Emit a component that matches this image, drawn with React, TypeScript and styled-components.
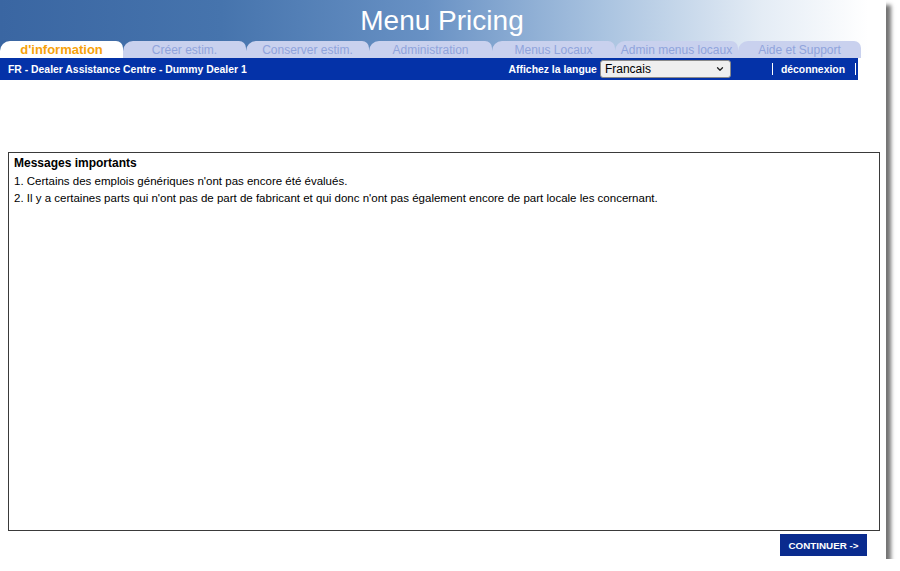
import React from 'react';
import styled, { createGlobalStyle } from 'styled-components';
import { ChevronDown } from 'lucide-react';

const GlobalStyle = createGlobalStyle`
  html, body {
    margin: 0;
    padding: 0;
    background: #ffffff;
  }
  body {
    font-family: 'Liberation Sans', Arial, sans-serif;
  }
`;

const Frame = styled.div`
  width: 886px;
  height: 559px;
  background: #ffffff;
  box-shadow: 5px 5px 4px rgba(0, 0, 0, 0.55);
  display: flex;
  flex-direction: column;
`;

const Header = styled.div`
  height: 58px;
  background: linear-gradient(
    to right,
    #3a66a2 0%,
    #4674ad 25%,
    #6891c4 48%,
    #a9c3e0 68%,
    #e4ecf5 86%,
    #ffffff 98%
  );
  display: flex;
  flex-direction: column;
`;

const Title = styled.h1`
  margin: 0;
  height: 41px;
  line-height: 41px;
  text-align: center;
  color: #ffffff;
  font-family: 'Liberation Sans', Arial, sans-serif;
  font-weight: normal;
  font-size: 28px;
  padding-right: 2px;
`;

const TabRow = styled.div`
  display: flex;
  height: 17px;
  width: 861px;
`;

const Tab = styled.div<{ $active?: boolean }>`
  width: 123px;
  height: 17px;
  display: flex;
  align-items: center;
  justify-content: center;
  border-radius: 10px 7px 0 0;
  background: ${p => (p.$active ? '#ffffff' : '#c9d1ee')};
  color: ${p => (p.$active ? '#f7a20a' : '#90a4dc')};
  font-size: ${p => (p.$active ? '13px' : '12px')};
  font-weight: ${p => (p.$active ? 'bold' : 'normal')};
  white-space: nowrap;
  box-sizing: border-box;
`;

const NavBar = styled.div`
  width: 858px;
  height: 22px;
  background: #0432a8;
  display: flex;
  align-items: center;
  color: #ffffff;
  font-size: 10.4px;
  font-weight: bold;
  box-sizing: border-box;
  padding: 0 2px 0 8px;
`;

const DealerName = styled.span`
  flex: 1;
`;

const LangLabel = styled.span`
  margin-right: 3px;
`;

const SelectWrap = styled.div`
  position: relative;
  width: 131px;
  height: 18px;
  margin-right: 41px;
`;

const LangSelect = styled.select`
  appearance: none;
  width: 100%;
  height: 100%;
  margin: 0;
  padding: 0 0 0 4px;
  border: 1px solid #8a8a8a;
  border-radius: 3px;
  background: #efefef;
  color: #000000;
  font-family: 'Liberation Sans', Arial, sans-serif;
  font-size: 12px;
  box-sizing: border-box;
`;

const SelectArrow = styled.span`
  position: absolute;
  right: 6px;
  top: 4px;
  display: flex;
  pointer-events: none;
  color: #222222;
`;

const Separator = styled.span`
  display: inline-block;
  width: 1px;
  height: 12px;
  background: #ffffff;
`;

const LogoutLink = styled.a`
  color: #ffffff;
  text-decoration: none;
  margin: 0 10px 0 8px;
`;

const Spacer = styled.div`
  height: 72px;
`;

const MessageBox = styled.div`
  margin-left: 8px;
  width: 872px;
  height: 379px;
  border: 1px solid #3a3a3a;
  box-sizing: border-box;
  padding: 2px 5px 0;
  font-size: 11.5px;
  line-height: 17.6px;
  color: #000000;
`;

const MessageTitle = styled.div`
  font-weight: bold;
  font-size: 12px;
`;

const MessageLine = styled.div``;

const Footer = styled.div`
  display: flex;
  justify-content: flex-end;
  padding: 3px 19px 0 0;
`;

const ContinueButton = styled.button`
  width: 87px;
  height: 22px;
  border: none;
  background: #0a2b8e;
  color: #ffffff;
  font-family: 'Liberation Sans', Arial, sans-serif;
  font-size: 9.8px;
  font-weight: bold;
  padding: 0;
  cursor: pointer;
`;

const tabs = [
  "d'information",
  'Créer estim.',
  'Conserver estim.',
  'Administration',
  'Menus Locaux',
  'Admin menus locaux',
  'Aide et Support',
];

export default function App() {
  return (
    <>
      <GlobalStyle />
      <Frame>
        <Header>
          <Title>Menu Pricing</Title>
          <TabRow>
            {tabs.map((t, i) => (
              <Tab key={t} $active={i === 0}>
                {t}
              </Tab>
            ))}
          </TabRow>
        </Header>
        <NavBar>
          <DealerName>FR - Dealer Assistance Centre - Dummy Dealer 1</DealerName>
          <LangLabel>Affichez la langue</LangLabel>
          <SelectWrap>
            <LangSelect defaultValue="fr">
              <option value="fr">Francais</option>
              <option value="en">English</option>
            </LangSelect>
            <SelectArrow>
              <ChevronDown size={10} strokeWidth={3} />
            </SelectArrow>
          </SelectWrap>
          <Separator />
          <LogoutLink href="#">déconnexion</LogoutLink>
          <Separator />
        </NavBar>
        <Spacer />
        <MessageBox>
          <MessageTitle>Messages importants</MessageTitle>
          <MessageLine>1. Certains des emplois génériques n'ont pas encore été évalués.</MessageLine>
          <MessageLine>
            2. Il y a certaines parts qui n'ont pas de part de fabricant et qui donc n'ont pas également encore de part locale les concernant.
          </MessageLine>
        </MessageBox>
        <Footer>
          <ContinueButton>CONTINUER -&gt;</ContinueButton>
        </Footer>
      </Frame>
    </>
  );
}
